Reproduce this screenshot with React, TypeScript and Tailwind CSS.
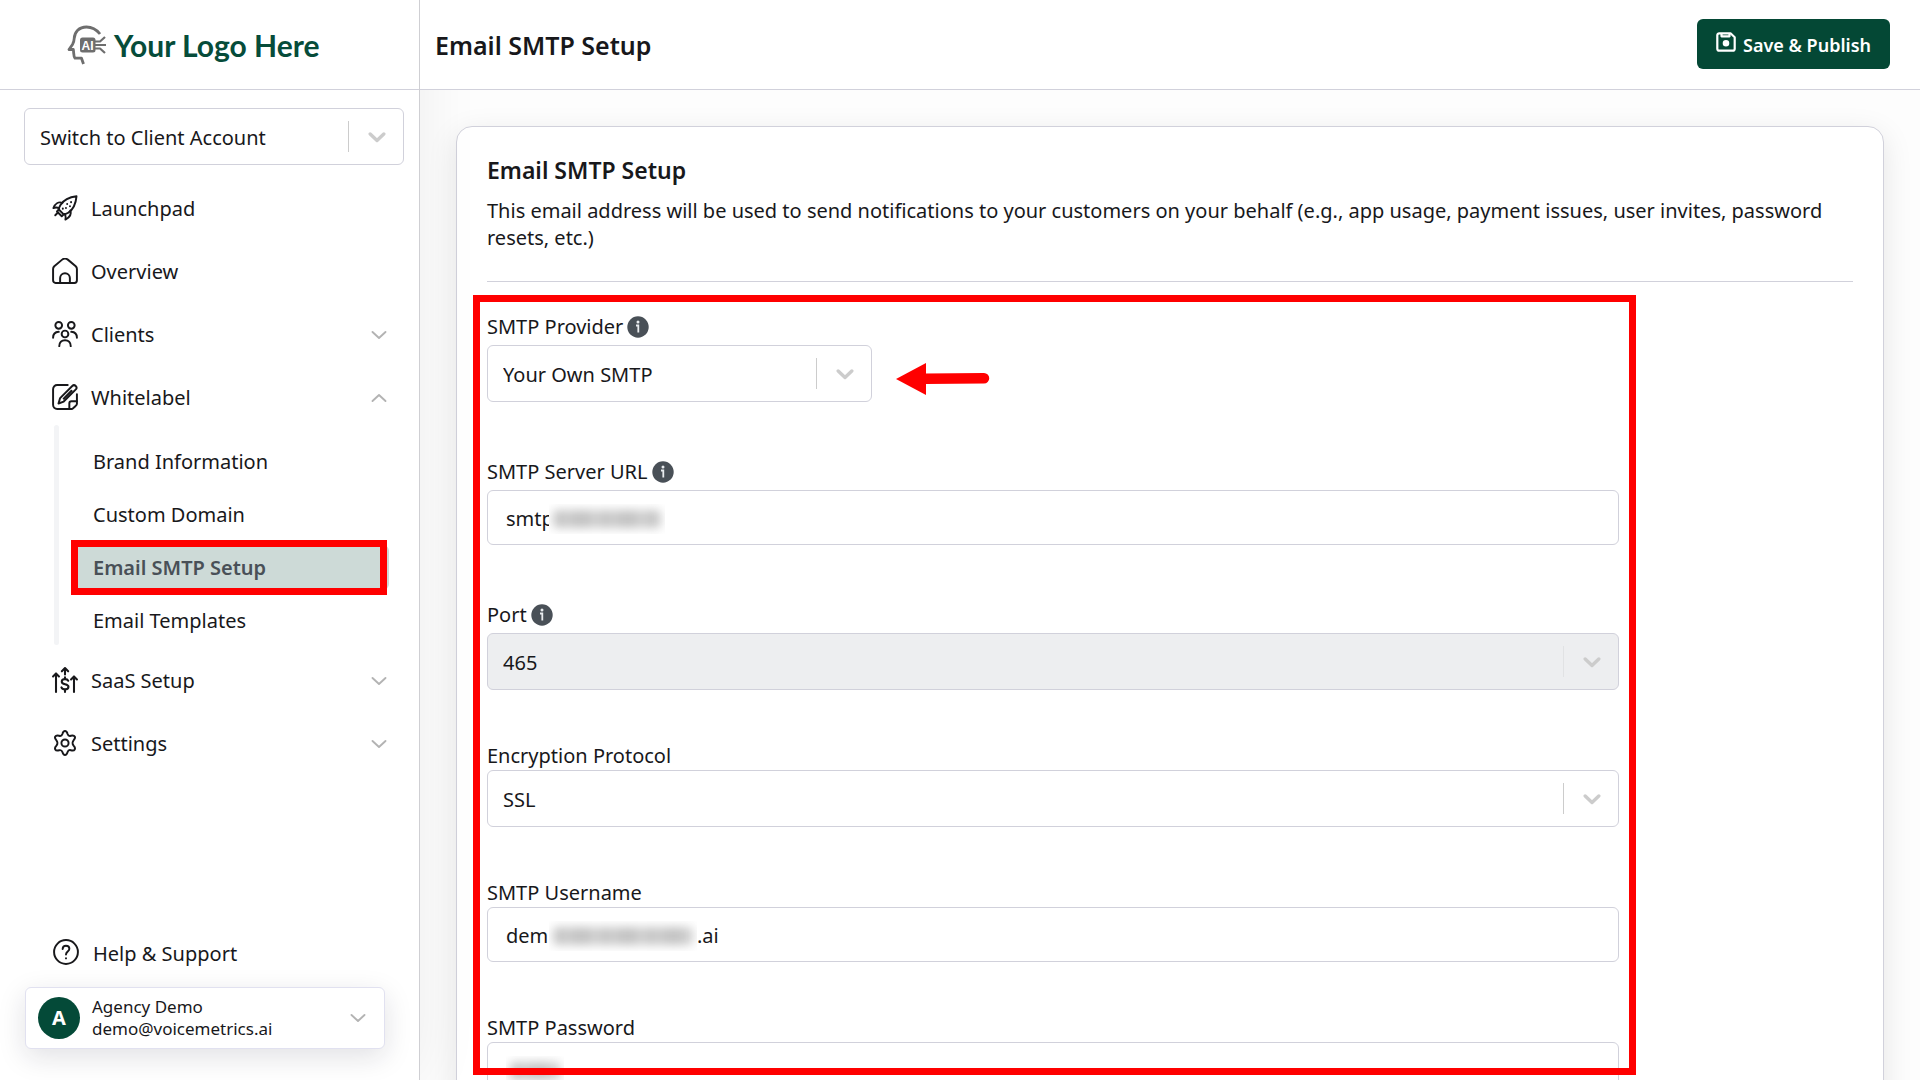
import type { ReactNode } from "react";

type IconProps = { children: ReactNode };

function NavIcon({ children }: IconProps) {
  return (
    <svg
      viewBox="0 0 24 24"
      className="mb-0.5 size-[26px] shrink-0"
      fill="none"
      stroke="currentColor"
      strokeWidth="1.8"
      strokeLinecap="round"
      strokeLinejoin="round"
      aria-hidden="true"
    >
      {children}
    </svg>
  );
}

const icons = {
  rocket: (
    <NavIcon>
      <path d="M22.600 1.200C16 2 11 4.300 7.800 9.200c-1 1.600-1.400 3-1.500 4.200l4.500 4.500c1.200 0 2.700-.5 4.200-1.500C20 13 22 8 22.600 1.200Z" />
      <path d="M9.500 7.200C6 5.900 2.900 8 1.300 12c1.900-.7 3.700-.6 5.300.3M17 14.300c1.100 3.500-.8 6.500-4.600 8.400.5-2.100.3-3.700-.6-5.200M6.300 13.400l-1.700 1.800 4.400 4.400 1.800-1.700M5.500 16.200 3 18.700" />
      <path d="M17.600 6.500v.1M14 8.300v.1M16.600 10.300v.1M12.900 12v.1M10 12.500v.1" />
    </NavIcon>
  ),
  home: (
    <NavIcon>
      <path d="M1 10.100c0-1 .4-1.800 1.100-2.500L9.400 1.500c1.600-1.300 3.600-1.300 5.200 0l7.300 6.100c.7.700 1.100 1.500 1.100 2.500V20.500c0 1.500-.9 2.500-2.300 2.500H3.300C1.900 23 1 22 1 20.500Z" />
      <path d="M7.500 23v-4.500a4.500 4.500 0 0 1 9 0V23" />
    </NavIcon>
  ),
  clients: (
    <NavIcon>
      <circle cx="6.200" cy="4" r="3.100" />
      <circle cx="17.800" cy="4" r="3.100" />
      <circle cx="12" cy="12" r="3.100" />
      <path d="M1 15.500c0-3 1.800-5.300 5.200-5.500M23 15.500c0-3-1.800-5.300-5.200-5.500M6.700 23.200c0-3.400 2.200-5.500 5.300-5.500s5.300 2.100 5.300 5.500" />
    </NavIcon>
  ),
  whitelabel: (
    <NavIcon>
      <path d="M14.500 1H4.800A3.800 3.800 0 0 0 1 4.800v14.400A3.800 3.800 0 0 0 4.800 23h13M23 9.500V16" />
      <path d="M23 16h-5a2 2 0 0 0-2 2v5h2.500c.8 0 4.500-3.700 4.500-4.500Z" />
      <path d="M7.500 13 18.700 1.800a2.300 2.300 0 0 1 3.300 3.200L10.800 16.200 6 18ZM10.800 13.500 18 6.200" />
    </NavIcon>
  ),
  saas: (
    <NavIcon>
      <path d="M3.700 23V6.200M1 8.700l2.700-2.800 2.700 2.800M20.300 23V9M17.600 11.500l2.700-2.800 2.700 2.800M12 7V1.200M9.100 4 12 1l2.900 3" strokeWidth="1.900" />
      <path d="M15 12.700c-.5-1-1.500-1.500-3-1.500-1.800 0-3 .8-3 2.300 0 3.200 6.200 1.500 6.200 4.700 0 1.500-1.300 2.400-3.200 2.400-1.600 0-2.800-.6-3.300-1.800M12 9.500v1.700M12 20.600V23" strokeWidth="1.900" />
    </NavIcon>
  ),
  settings: (
    <NavIcon>
      <circle cx="12" cy="12" r="3.300" />
      <path d="M9.600 3.700C10.100 1.900 10.900 1 12 1s1.900.9 2.400 2.700c.5 1.500 1.500 2 3 1.600 1.900-.5 3-.3 3.600.7.600 1 .2 2.100-1.100 3.500-1 1.100-1.400 3.400 0 5 1.300 1.400 1.700 2.500 1.100 3.500-.6 1-1.700 1.200-3.600.7-1.500-.4-2.500.1-3 1.600C13.900 22.100 13.100 23 12 23s-1.900-.9-2.400-2.700c-.5-1.500-1.500-2-3-1.600-1.900.5-3 .3-3.600-.7-.6-1-.2-2.100 1.100-3.500 1.400-1.600 1-3.900 0-5C2.800 8.100 2.400 7 3 6s1.700-1.200 3.600-.7c1.500.4 2.500-.1 3-1.600Z" />
    </NavIcon>
  ),
  help: (
    <NavIcon>
      <circle cx="12" cy="12" r="11" />
      <path d="M8.900 9.200A3.100 3.100 0 0 1 12 6.300c1.800 0 3.100 1.100 3.100 2.800 0 2.500-3.100 2.500-3.100 5.200M12 17.700v.2" />
    </NavIcon>
  ),
};

function Chevron({ up = false }: { up?: boolean }) {
  return (
    <svg viewBox="0 0 16 10" className="h-[10px] w-4 shrink-0" fill="none" stroke="#b3b3b3" strokeWidth="1.9" strokeLinecap="round" strokeLinejoin="round" aria-hidden="true">
      <path d={up ? "M1.500 8 8 2l6.500 6" : "M1.500 2 8 8l6.500-6"} />
    </svg>
  );
}

function Logo() {
  return (
    <div className="flex items-center gap-[7px]">
      <svg viewBox="0 0 40 40" className="size-10" fill="none" stroke="#6e6e6e" strokeWidth="2.800" strokeLinejoin="round" aria-hidden="true">
        <path d="M33 9C29 4 24.500 2 19.500 2 12 2 7.500 7 7.200 13.500c-.1 2-.5 4-1.700 6L2 24.500h4.300c.7 3.500 0 7 1.700 8.700h6.500l2 5.800" />
        <rect x="13" y="12.500" width="15.500" height="15" rx="2.500" fill="#6e6e6e" stroke="none" />
        <path d="M28 16.500h5l5-4.500M28 20h11M28 23.500h5l5 4.500" strokeWidth="2.200" />
        <text x="14.500" y="24.500" fontFamily="Liberation Sans" fontWeight="700" fontSize="12" fill="#fff" stroke="none">AI</text>
      </svg>
      <span className="font-[Lato] text-[30px] leading-9 font-bold whitespace-nowrap text-[#064c3a]">Your Logo Here</span>
    </div>
  );
}

function Select({ id, options, disabled = false, label }: { id: string; options: string[]; disabled?: boolean; label?: string }) {
  return (
    <div className="relative">
      <select
        id={id}
        aria-label={label}
        disabled={disabled}
        className="h-[57px] w-full appearance-none rounded-md border border-[#d1d1db] bg-white pt-0.5 pr-16 pl-[15px] text-xl text-[#18181b] opacity-100 disabled:bg-[#edeef0]"
      >
        {options.map((o) => (
          <option key={o}>{o}</option>
        ))}
      </select>
      <div className="pointer-events-none absolute inset-y-3 right-[18px] flex items-center gap-[19px]">
        <span className={disabled ? "h-[31px] w-px bg-[#e1e2e4]" : "h-[31px] w-px bg-[#cccccc]"} />
        <svg viewBox="0 0 18 12" className="h-3 w-[18px]" fill="none" stroke="#cccccc" strokeWidth="3.400" strokeLinecap="round" strokeLinejoin="round" aria-hidden="true">
          <path d="M2.200 3 9 9.500 15.800 3" />
        </svg>
      </div>
    </div>
  );
}

function InfoIcon() {
  return (
    <svg viewBox="0 0 22 22" className="size-[22px]" aria-hidden="true">
      <circle cx="11" cy="11" r="10.700" fill="#495057" />
      <circle cx="11" cy="6" r="1.500" fill="#e9ecef" />
      <path d="M9 9.500h2.300V16.500" fill="none" stroke="#e9ecef" strokeWidth="1.800" />
    </svg>
  );
}

function Field({ id, label, info = false, children }: { id: string; label: string; info?: boolean; children: ReactNode }) {
  return (
    <div>
      <div className={info ? "flex h-9 items-center gap-1" : "flex h-7 items-center"}>
        <label htmlFor={id} className="pb-0.5">{label}</label>
        {info && <InfoIcon />}
      </div>
      {children}
    </div>
  );
}

function Redacted({ className }: { className: string }) {
  return (
    <div className={`overflow-hidden ${className}`} aria-hidden="true">
      <div className="mx-1 mt-1.5 h-[18px] rounded-sm bg-[repeating-linear-gradient(90deg,#c8c8c8_0_13px,#cecece_13px_19px,#c4c4c4_19px_38px,#d2d2d2_38px_46px)] blur-[5px]" />
    </div>
  );
}

const inputBox = "flex h-[55px] items-center overflow-hidden rounded-md border border-[#d1d1db] bg-white pt-0.5 pl-[18px]";

function NavItem({ icon, label, arrow }: { icon: ReactNode; label: string; arrow?: "up" | "down" }) {
  const row = "flex h-[63px] w-full items-center pr-8 pl-[52px] text-left";
  const body = (
    <>
      {icon}
      <span className="ml-[13px] flex-1">{label}</span>
      {arrow && <Chevron up={arrow === "up"} />}
    </>
  );
  return arrow ? (
    <button type="button" aria-expanded={arrow === "up"} className={row}>{body}</button>
  ) : (
    <a href="#" className={row}>{body}</a>
  );
}

const subItems = ["Brand Information", "Custom Domain", "Email SMTP Setup", "Email Templates"];

function Sidebar() {
  return (
    <aside className="relative z-10 flex w-[420px] shrink-0 flex-col border-r border-[#cfcfd3] bg-white shadow-[0_0_60px_rgba(0,0,0,0.07)]">
      <div className="flex h-[90px] items-center border-b border-[#d1d1db] pl-[67px]">
        <Logo />
      </div>
      <div className="mt-[18px] mr-[15px] ml-6">
        <Select id="account" label="Switch to Client Account" options={["Switch to Client Account"]} />
      </div>
      <nav className="pt-3">
        <NavItem icon={icons.rocket} label="Launchpad" />
        <NavItem icon={icons.home} label="Overview" />
        <NavItem icon={icons.clients} label="Clients" arrow="down" />
        <NavItem icon={icons.whitelabel} label="Whitelabel" arrow="up" />
        <div className="-mt-1 flex pr-[30px] pl-[54px]">
          <div className="mb-1 w-[5px] rounded-full bg-[#f3f4f6]" />
          <ul className="ml-4 flex-1 pt-2.5 pb-0.5">
            {subItems.map((item) => {
              const active = item === "Email SMTP Setup";
              return (
                <li key={item} className="py-1">
                  <a
                    href="#"
                    aria-current={active ? "page" : undefined}
                    className={
                      active
                        ? "relative flex h-[45px] items-center rounded-md bg-[#cddad7] pl-[18px] font-semibold text-[#495057]"
                        : "flex h-[45px] items-center pl-[18px]"
                    }
                  >
                    {item}
                    {active && <span className="absolute -top-[5px] right-0.5 -bottom-[5px] -left-1 border-7 border-[#ff0000]" />}
                  </a>
                </li>
              );
            })}
          </ul>
        </div>
        <NavItem icon={icons.saas} label="SaaS Setup" arrow="down" />
        <NavItem icon={icons.settings} label="Settings" arrow="down" />
      </nav>
      <div className="mt-auto pb-[31px]">
        <a href="#" className="mb-2.5 ml-[53px] flex h-12 items-center">
          {icons.help}
          <span className="ml-3.5">Help &amp; Support</span>
        </a>
        <div className="mr-[34px] ml-[25px]">
          <button
            type="button"
            className="flex h-[62px] w-full items-center rounded-md border border-[#e1e1f0] bg-white pr-[18px] pl-3 text-left text-[17px] leading-[22px] shadow-[0_8px_28px_rgba(20,25,50,0.13)]"
          >
            <span className="flex size-[42px] items-center justify-center rounded-full bg-[#044a38] text-xl font-bold text-white">A</span>
            <span className="ml-3 flex-1">
              <span className="block">Agency Demo</span>
              <span className="block">demo@voicemetrics.ai</span>
            </span>
            <Chevron />
          </button>
        </div>
      </div>
    </aside>
  );
}

export default function App() {
  return (
    <div className="flex h-screen overflow-hidden bg-[#fdfdfd] font-['Noto_Sans',sans-serif] text-xl leading-[27px] text-[#18181b]">
      <Sidebar />
      <div className="flex min-w-0 flex-1 flex-col">
        <header className="relative z-20 flex h-[90px] shrink-0 items-center justify-between border-b border-[#d1d1db] bg-white pr-[30px] pb-px pl-[15px]">
          <h1 className="pt-0.5 text-[25px] font-semibold">Email SMTP Setup</h1>
          <button type="button" className="flex h-[50px] items-center gap-[7px] rounded-md bg-[#044835] px-[19px] pt-0.5 text-[18px] font-semibold text-white">
            <svg viewBox="0 0 20 20" className="mb-1.5 size-5" fill="none" stroke="currentColor" strokeWidth="2.200" strokeLinejoin="round" aria-hidden="true">
              <path d="M3 1.300h11.500l4.200 3.900v11.500a2 2 0 0 1-2 2H3.300a2 2 0 0 1-2-2V3.300a2 2 0 0 1 2-2Z" />
              <path d="M5.500 1.300v3h8v-3" />
              <circle cx="10" cy="11.300" r="2.200" fill="currentColor" />
            </svg>
            Save &amp; Publish
          </button>
        </header>
        <main className="min-h-0 flex-1 overflow-y-auto pt-9 pr-9 pb-9 pl-9 [scrollbar-width:none]">
          <section className="rounded-2xl border border-[#d1d1db] bg-white px-[30px] pt-7 pb-9 shadow-[0_8px_30px_rgba(0,0,0,0.1)]">
            <h2 className="text-[23px] leading-[30px] font-semibold">Email SMTP Setup</h2>
            <p className="mt-3 border-b border-[#d1d1db] pb-[30px]">
              This email address will be used to send notifications to your customers on your behalf (e.g., app usage, payment issues, user invites, password resets, etc.)
            </p>
            <form className="relative flex w-[83%] flex-col gap-[52px] pt-[27px] pr-0.5">
              <Field id="provider" label="SMTP Provider" info>
                <div className="flex items-center gap-6">
                  <div className="w-[34%]">
                    <Select id="provider" options={["Your Own SMTP"]} />
                  </div>
                  <svg viewBox="0 0 94 32" className="mt-2.5 h-8 w-[94px]" aria-hidden="true">
                    <path d="M0 16 30 0v10.500L88 10a5 5 0 0 1 0 10.500L30 21v11Z" fill="#ff0000" />
                  </svg>
                </div>
              </Field>
              <Field id="server" label="SMTP Server URL" info>
                <div className={inputBox}>
                  <input id="server" type="text" defaultValue="smtp" className="w-[43px] outline-none" />
                  <Redacted className="h-[30px] w-[116px]" />
                </div>
              </Field>
              <Field id="port" label="Port" info>
                <Select id="port" options={["465"]} disabled />
              </Field>
              <Field id="encryption" label="Encryption Protocol">
                <Select id="encryption" options={["SSL"]} />
              </Field>
              <Field id="username" label="SMTP Username">
                <div className={inputBox}>
                  <input id="username" type="text" defaultValue="dem" className="w-[43px] outline-none" />
                  <Redacted className="h-[30px] w-[148px]" />
                  <span>.ai</span>
                </div>
              </Field>
              <Field id="password" label="SMTP Password">
                <div className={inputBox}>
                  <input id="password" type="password" className="absolute w-1/2 outline-none" />
                  <Redacted className="h-[30px] w-[58px]" />
                </div>
              </Field>
              <div className="pointer-events-none absolute top-[13px] -right-[15px] -left-3.5 h-[780px] border-7 border-[#ff0000]" />
            </form>
          </section>
        </main>
      </div>
    </div>
  );
}
